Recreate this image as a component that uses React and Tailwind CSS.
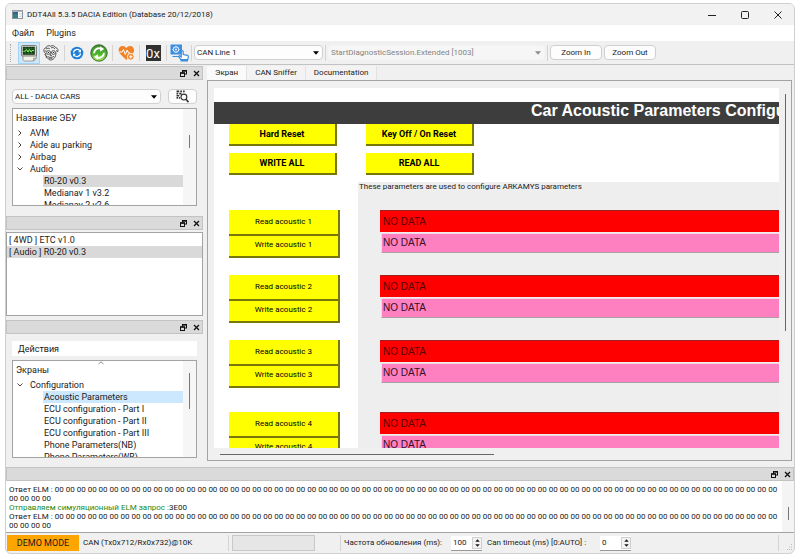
import { useState } from 'react'
import clsx from 'clsx'

const UI_FONT = "font-['Roboto','Noto_Sans',sans-serif]"
const SCREEN_FONT = "font-['Liberation_Sans',Arial,sans-serif]"

const ecuTree = [
  { label: 'AVM' },
  { label: 'Aide au parking' },
  { label: 'Airbag' },
  { label: 'Audio', open: true, children: ['R0-20 v0.3', 'Medianav 1 v3.2', 'Medianav 2 v2.6'] },
]

const screenTree = [
  {
    label: 'Configuration',
    open: true,
    children: [
      'Acoustic Parameters',
      'ECU configuration - Part I',
      'ECU configuration - Part II',
      'ECU configuration - Part III',
      'Phone Parameters(NB)',
      'Phone Parameters(WB)',
    ],
  },
]

const loadedEcus = ['[ 4WD ] ETC v1.0', '[ Audio ] R0-20 v0.3']
const tabs = ['Экран', 'CAN Sniffer', 'Documentation']
const elmReply = Array(70).fill('00').join(' ')

function AppIcon() {
  return (
    <svg viewBox="0 0 11 9" className="h-[9px] w-[11px]">
      <rect x="0.5" y="0.5" width="10" height="8" fill="#fff" stroke="#8a9299" />
      <rect x="0.5" y="0.5" width="10" height="1.5" fill="#a9b4bb" />
      <rect x="1" y="2" width="5" height="6" fill="#2e7f86" />
      <rect x="1" y="2" width="5" height="2" fill="#3b5d8c" />
      <path d="M7 3.5h3M7 5h3M7 6.5h3" stroke="#c4c9cd" strokeWidth="0.6" />
    </svg>
  )
}

function DiagnosticIcon() {
  return (
    <svg viewBox="0 0 18 18" className="size-[18px]">
      <path d="M3 11h13.500v2.500L13.500 17H4.500C3.500 17 3 16 3 15z" fill="#f2f2ea" stroke="#8b8b84" strokeWidth="0.8" />
      <path d="M13.500 17v-3h3z" fill="#c9c9c0" stroke="#8b8b84" strokeWidth="0.6" />
      <rect x="1.500" y="1.500" width="15" height="10.500" rx="1" fill="#d6d6cd" stroke="#66665f" strokeWidth="0.8" />
      <rect x="2.800" y="2.800" width="12" height="8" fill="#17351a" />
      <path d="M3 4.500h11.500M3 7h11.500M3 9.300h11.500M5.500 3v8M8.500 3v8M11.500 3v8" stroke="#2f7a2f" strokeWidth="0.5" />
      <path d="M3.500 7.500l2-.5 1-1.500 1.500 2.500 1.500-2.500 1.500 2.500 1-1.500h2" fill="none" stroke="#7dff5a" strokeWidth="1" />
    </svg>
  )
}

function ExpertIcon() {
  return (
    <svg viewBox="0 0 18 18" className="size-[18px]" fill="none" stroke="#4a4a4a" strokeWidth="0.9">
      <path d="M3 9C1 7 1.500 4 4 4c0-2 3-3 4.500-1.800C10.500 1 13 2 13.500 3.500c2.500.5 3 3 2 4.500" />
      <path d="M4 5c1.500-1 3-1 4 0M9 4c1.500-1 3-.5 4 1M2.500 7h2M14 6.500l1.500 1" />
      <circle cx="6.500" cy="8.500" r="1.900" />
      <circle cx="11.500" cy="8.500" r="1.900" />
      <path d="M8.400 8.300h1.200M9 9.500l-.8 2h1.700M3.500 9c0 3 2 6 4.500 7 3 .5 6-2.500 6-7.500" />
      <path d="M5.500 12.500c2 1.200 4.500 1.200 6.500-.3M7 14.200h3.500M2.500 10.500l1.500 1M3.500 13l1.500.5" />
      <path d="M6 8.500h1M11 8.500h1" stroke="#222" strokeWidth="1.200" />
    </svg>
  )
}

function SyncIcon() {
  return (
    <svg viewBox="0 0 14 14" className="size-[14px]">
      <circle cx="7" cy="7" r="6.300" fill="#1c7ed6" />
      <path d="M3.400 6.600A3.700 3.700 0 0 1 9.800 4.600M10.600 7.400A3.700 3.700 0 0 1 4.200 9.400" fill="none" stroke="#fff" strokeWidth="1.300" />
      <path d="M11 3.200v3H8zM3 10.800v-3h3z" fill="#fff" />
    </svg>
  )
}

function RefreshIcon() {
  return (
    <svg viewBox="0 0 18 18" className="size-[18px]">
      <defs>
        <linearGradient id="refresh-fill" x1="0" y1="0" x2="0" y2="1">
          <stop offset="0" stopColor="#3f8f2c" />
          <stop offset="0.55" stopColor="#4db32d" />
          <stop offset="1" stopColor="#a5ea55" />
        </linearGradient>
      </defs>
      <circle cx="9" cy="9" r="8.200" fill="url(#refresh-fill)" stroke="#2b5b24" strokeWidth="0.9" />
      <path d="M4 9.200A5 5 0 0 1 11 4.700M14 8.800A5 5 0 0 1 7 13.300" fill="none" stroke="#fff" strokeWidth="1.900" />
      <path d="M10 2.300l4.200 2.700-4 2.700zM8 15.700L3.800 13l4-2.700z" fill="#fff" />
    </svg>
  )
}

function HeartIcon() {
  return (
    <svg viewBox="0 0 17 16" className="h-4 w-[17px]">
      <path d="M8.300 15L2 8.700C-.8 5.500 1 1 4.500 1c1.800 0 3 .9 3.800 2.200C9.100 1.900 10.400 1 12.200 1c3.500 0 5.200 4.500 2.500 7.700z" fill="#f08326" />
      <path d="M1 7h3.200l1.300-2.500 1.800 5L9.200 5l1.300 3h1.800" fill="none" stroke="#fff" strokeWidth="1" />
      <circle cx="12.800" cy="11.800" r="3.400" fill="#f08326" stroke="#fff" strokeWidth="0.9" />
      <path d="M12.800 10v3.600M11 11.800h3.600" stroke="#fff" strokeWidth="1" />
    </svg>
  )
}

function TouchIcon() {
  return (
    <svg viewBox="0 0 19 18" className="h-[18px] w-[19px]">
      <rect x="0.500" y="0.500" width="11.500" height="10" rx="0.500" fill="#3a8ee0" />
      <circle cx="6" cy="5.500" r="2.700" fill="none" stroke="#fff" strokeWidth="0.900" />
      <circle cx="6" cy="5.500" r="0.900" fill="#fff" />
      <path d="M6 1.800v1M6 8.200v1M2.300 5.500h1M8.700 5.500h1M3.400 2.900l.7.700M8 7.500l.7.700M8.700 2.900l-.7.700" stroke="#fff" strokeWidth="0.800" />
      <path d="M2.500 12.500h6" stroke="#3a8ee0" strokeWidth="1.200" />
      <path d="M11 15.500l-2.500-3 1.200-.8 1.600 1.200V7.500c0-1.200 1.900-1.200 1.900 0v3l4.300.9c.6.200.8.600.8 1.200l-.4 2.900z" fill="#fff" stroke="#3a8ee0" strokeWidth="1.200" />
      <path d="M10.500 15.500h7.500v2h-7.500z" fill="#3a8ee0" />
    </svg>
  )
}

function ScanIcon() {
  return (
    <svg viewBox="0 0 12 12" className="size-[13px]" fill="none" stroke="#333">
      <path d="M.5 1.300h2.500M4 1.300h1.500M6.500 1.300H8M.5 3.300h1.500M3 3.300h2M.5 5.300h2.500M.5 7.300h1.500M2.800 7.300h1" strokeWidth="1.500" />
      <circle cx="7.300" cy="6.500" r="2.700" fill="#fff" strokeWidth="1" />
      <path d="M9.200 8.500l2.300 2.700" strokeWidth="1.400" />
    </svg>
  )
}

function Caret({ className }) {
  return (
    <svg viewBox="0 0 6 4" className={clsx('pointer-events-none h-1 w-1.5', className)} fill="currentColor">
      <path d="M0 .3h6L3 3.700z" />
    </svg>
  )
}

function Combo({ label, value, disabled, className }) {
  return (
    <label className={clsx('relative flex h-[15px] items-center', className)}>
      <select
        aria-label={label}
        disabled={disabled}
        className={clsx(
          'h-full w-full appearance-none rounded-sm border pl-[2px] pr-4 leading-[12px]',
          disabled ? 'border-[#f4f4f4] bg-[#f6f6f6] text-[#838383]' : 'border-[#d0d0d0] bg-[#fdfdfd] text-[#1a1a1a]'
        )}
      >
        <option>{value}</option>
      </select>
      <Caret className={clsx('absolute right-1', disabled ? 'text-[#8a8a8a]' : 'text-black')} />
    </label>
  )
}

function ToolButton({ label, active, children }) {
  return (
    <button
      aria-label={label}
      className={clsx(
        'flex h-[22px] w-[22px] items-center justify-center',
        active && 'border border-[#a5d3f5] bg-[#cce6fb]'
      )}
    >
      {children}
    </button>
  )
}

function Separator() {
  return <div className="h-4 w-px bg-[#d4d4d4]" />
}

function DockTitle() {
  return (
    <div className="flex h-[14px] shrink-0 items-center justify-end gap-1.5 border border-[#c3c3c3] bg-[#dadada] pr-[2px]">
      <button aria-label="Float">
        <svg viewBox="0 0 7 7" className="size-[7px]" fill="#dadada" stroke="#111">
          <rect x="2.500" y="0.500" width="4" height="3.500" />
          <path d="M2 1h5" strokeWidth="1.300" />
          <rect x="0.500" y="3" width="4" height="3.500" />
          <path d="M0 3h5" strokeWidth="1.300" />
        </svg>
      </button>
      <button aria-label="Close">
        <svg viewBox="0 0 7 7" className="size-[7px]" stroke="#111" strokeWidth="1.300">
          <path d="M1 1l5 5M6 1L1 6" />
        </svg>
      </button>
    </div>
  )
}

function Chevron({ open }) {
  return (
    <svg viewBox="0 0 6 6" className="size-1.5 shrink-0" fill="none" stroke="#444">
      <path d={open ? 'M.5 1.500L3 4l2.500-2.500' : 'M1.500 .5L4 3 1.500 5.500'} />
    </svg>
  )
}

function Tree({ header, nodes, initial, selectedClass, thumbClass, sortable }) {
  const [selected, setSelected] = useState(initial)
  return (
    <div className="flex h-[98px] overflow-hidden border border-[#a3a3a3] bg-white">
      <div className="min-w-0 flex-1 overflow-hidden">
        <div className="relative flex h-[18px] items-center pl-[3px]">
          {header}
          {sortable && (
            <svg viewBox="0 0 6 4" className="absolute left-1/2 top-0 h-1 w-1.5" fill="none" stroke="#888">
              <path d="M.5 3L3 .8 5.500 3" />
            </svg>
          )}
        </div>
        {nodes.map((node) => (
          <div key={node.label}>
            <button className="flex h-3 w-full items-center gap-[7px] pl-1 text-left">
              <Chevron open={node.open} />
              {node.label}
            </button>
            {node.open &&
              node.children.map((child) => (
                <button
                  key={child}
                  onClick={() => setSelected(child)}
                  className="block h-3 w-full pl-[30px] text-left"
                >
                  <span className={clsx('block h-3 truncate pl-px leading-[12px]', child === selected && selectedClass)}>
                    {child}
                  </span>
                </button>
              ))}
          </div>
        ))}
      </div>
      <div className="flex w-[13px] justify-center bg-[#f6f6f6]">
        <div className={clsx('w-px bg-[#777]', thumbClass)} />
      </div>
    </div>
  )
}

function ScreenButton({ className, children }) {
  return (
    <button
      className={clsx(
        'flex items-center justify-center border-b-2 border-r-2 border-[#77770a] bg-[#ffff00] text-black',
        className
      )}
    >
      {children}
    </button>
  )
}

function AcousticButtons({ index }) {
  return (
    <div className={clsx('flex h-12 w-[111px] flex-col text-[8px]', UI_FONT)}>
      <ScreenButton className="h-[26px] shrink-0">Read acoustic {index}</ScreenButton>
      <ScreenButton className="h-[22px] shrink-0 pb-[2px]">Write acoustic {index}</ScreenButton>
    </div>
  )
}

function AcousticData({ index }) {
  return (
    <div className="flex h-12 flex-col text-[10px]">
      <output
        aria-label={`Acoustic ${index}`}
        className="flex h-[22px] shrink-0 items-center border-t border-[#a02020] bg-[#ff0000] pl-[3px] text-[#5a0000]"
      >
        NO DATA
      </output>
      <input
        aria-label={`New acoustic ${index}`}
        defaultValue="NO DATA"
        className="ml-px mt-px h-5 shrink-0 border-b border-l border-t border-b-[#a9a0a6] border-l-[#f6d5e4] border-t-[#f6d5e4] bg-[#ff80c0] pb-[2px] pl-px text-[#33101f]"
      />
    </div>
  )
}

function Spin({ id, value, className }) {
  return (
    <div className={clsx('flex h-[15px] items-center border-b border-[#999] bg-white pl-[2px]', className)}>
      <input id={id} type="text" inputMode="numeric" defaultValue={value} className="w-0 min-w-0 flex-1" />
      <div className="flex h-3 w-[10px] flex-col items-center justify-center gap-[2px] border border-[#cfcfcf] bg-[#f3f3f3]">
        <button aria-label="Increase">
          <Caret className="block h-[3px] w-[5px] rotate-180" />
        </button>
        <button aria-label="Decrease">
          <Caret className="block h-[3px] w-[5px]" />
        </button>
      </div>
    </div>
  )
}

export default function App() {
  const [tab, setTab] = useState('Экран')

  return (
    <div className={clsx('h-screen bg-white px-[5px] pb-[5px] pt-[3px] text-[9px] leading-[12px] text-[#1a1a1a]', UI_FONT)}>
      <div className="flex h-full flex-col overflow-hidden rounded-md border border-[#cfcfcf] bg-[#f0f0f0]">
        <header className="flex h-[21px] shrink-0 items-center bg-[#f2f2f2] pl-1.5">
          <AppIcon />
          <h1 className="ml-1 text-[8px]">DDT4All 5.3.5 DACIA Edition (Database 20/12/2018)</h1>
          <div className="ml-auto flex items-center gap-[25px] pr-3">
            <button aria-label="Minimize">
              <svg viewBox="0 0 8 8" className="size-2" stroke="#222">
                <path d="M0 4.500h8" />
              </svg>
            </button>
            <button aria-label="Maximize">
              <svg viewBox="0 0 8 8" className="size-2" fill="none" stroke="#222">
                <rect x="0.500" y="0.500" width="7" height="7" rx="1" />
              </svg>
            </button>
            <button aria-label="Close window">
              <svg viewBox="0 0 8 8" className="size-2" stroke="#222">
                <path d="M.5 .5l7 7M7.500 .5l-7 7" />
              </svg>
            </button>
          </div>
        </header>

        <nav className="flex h-4 shrink-0 items-center gap-3 bg-white pl-1.5">
          <button>Файл</button>
          <button>Plugins</button>
        </nav>

        <div className="flex h-6 shrink-0 items-center border-b border-[#c2c2c2] pl-1">
          <div className="mr-[7px] h-[18px] border-l border-dotted border-[#aaa]" />
          <ToolButton label="Connected mode" active><DiagnosticIcon /></ToolButton>
          <ToolButton label="Expert mode"><ExpertIcon /></ToolButton>
          <div className="ml-0.5 mr-px"><Separator /></div>
          <ToolButton label="Auto refresh"><SyncIcon /></ToolButton>
          <ToolButton label="Refresh"><RefreshIcon /></ToolButton>
          <div className="mx-0.5"><Separator /></div>
          <ToolButton label="Diagnostics"><HeartIcon /></ToolButton>
          <div className="mx-0.5"><Separator /></div>
          <ToolButton label="Hex input">
            <span className="flex h-4 w-[15px] items-center justify-center bg-[#303030] pt-[2px] text-[13px] text-white">
              0x
            </span>
          </ToolButton>
          <div className="ml-0.5 mr-px"><Separator /></div>
          <ToolButton label="Command"><TouchIcon /></ToolButton>
          <div className="ml-px mr-0.5"><Separator /></div>
          <Combo label="CAN line" value="CAN Line 1" className="w-[129px] text-[8px]" />
          <div className="mx-[2px]"><Separator /></div>
          <Combo label="Session" value="StartDiagnosticSession.Extended [1003]" disabled className="w-[217px] text-[8px]" />
          <div className="mx-[2px]"><Separator /></div>
          <button className="h-[15px] w-[52px] rounded-sm border border-[#d0d0d0] bg-[#fdfdfd] text-[8px]">Zoom In</button>
          <button className="ml-[2px] h-[15px] w-[52px] rounded-sm border border-[#d0d0d0] bg-[#fdfdfd] text-[8px]">Zoom Out</button>
        </div>

        <div className="flex min-h-0 flex-1 gap-1 pr-[2px] pt-px">
          <aside className="flex w-[197px] shrink-0 flex-col">
            <DockTitle />
            <div className="px-1.5 pb-[10px] pt-[9px]">
              <div className="mb-1 flex justify-between">
                <Combo label="Vehicle" value="ALL - DACIA CARS" className="w-[149px] text-[8px]" />
                <button aria-label="Scan" className="flex h-[15px] w-[29px] items-center justify-center rounded-sm border border-[#d0d0d0] bg-[#fdfdfd]">
                  <ScanIcon />
                </button>
              </div>
              <Tree
                header="Название ЭБУ"
                nodes={ecuTree}
                initial="R0-20 v0.3"
                selectedClass="bg-[#d9d9d9]"
                thumbClass="mt-[26px] h-[13px]"
              />
            </div>

            <DockTitle />
            <ul className="mt-[2px] min-h-0 flex-1 border border-[#a3a3a3] bg-white pt-px">
              {loadedEcus.map((ecu, i) => (
                <li key={ecu}>
                  <button className={clsx('block h-3 w-full pl-[2px] text-left', i === 1 && 'bg-[#d9d9d9]')}>{ecu}</button>
                </li>
              ))}
            </ul>

            <div className="mt-1">
              <DockTitle />
            </div>
            <div className="px-1.5 pb-[3px] pt-[7px]">
              <button className="mb-1 block h-[15px] w-full bg-white pl-1.5 text-left">Действия</button>
              <Tree
                header="Экраны"
                nodes={screenTree}
                initial="Acoustic Parameters"
                selectedClass="bg-[#cce8ff]"
                thumbClass="mt-3 h-9"
                sortable
              />
            </div>
          </aside>

          <main className="flex min-w-0 flex-1 flex-col">
            <div role="tablist" className="flex h-[14px] shrink-0 text-[8px]">
              {tabs.map((name) => (
                <button
                  key={name}
                  role="tab"
                  aria-selected={name === tab}
                  onClick={() => setTab(name)}
                  className={clsx('border-r border-[#e2e2e2] px-2', name === tab ? 'bg-[#fafafa]' : 'bg-[#f3f3f3]')}
                >
                  {name}
                </button>
              ))}
            </div>

            <div className={clsx('flex min-h-0 flex-1 flex-col border border-[#a3a3a3] pl-1.5 pt-[7px]', SCREEN_FONT)}>
              <div className="flex min-h-0 flex-1">
                <div className="flex min-w-0 flex-1 flex-col overflow-hidden bg-white">
                  <div className="mt-[14px] flex h-[22px] shrink-0 items-start overflow-hidden bg-[#3d3d3d] pl-[317px]">
                    <h2 className="whitespace-nowrap text-[16px] leading-[18px] font-bold text-white">
                      Car Acoustic Parameters Configuration
                    </h2>
                  </div>
                  <div className={clsx('grid shrink-0 grid-cols-[108px_108px] gap-x-[29px] gap-y-[7px] pb-[7px] pl-[15px] font-bold', UI_FONT)}>
                    <ScreenButton className="h-[22px]">Hard Reset</ScreenButton>
                    <ScreenButton className="h-[22px]">Key Off / On Reset</ScreenButton>
                    <ScreenButton className="h-[22px]">WRITE ALL</ScreenButton>
                    <ScreenButton className="h-[22px]">READ ALL</ScreenButton>
                  </div>
                  <div className="flex min-h-0 flex-1">
                    <div className="flex w-[144px] shrink-0 flex-col gap-[17px] pl-[15px] pt-[28px]">
                      <AcousticButtons index={1} />
                      <AcousticButtons index={2} />
                      <AcousticButtons index={3} />
                      <div className="mt-[7px]">
                        <AcousticButtons index={4} />
                      </div>
                    </div>
                    <div className="flex min-w-0 flex-1 flex-col bg-[#eeeeee]">
                      <p className={clsx('h-[28px] shrink-0 whitespace-nowrap pl-px text-[8px] leading-[10px]', UI_FONT)}>
                        These parameters are used to configure ARKAMYS parameters
                      </p>
                      <div className="flex flex-col gap-[17px] pl-[22px]">
                        <AcousticData index={1} />
                        <AcousticData index={2} />
                        <AcousticData index={3} />
                        <div className="mt-[7px]">
                          <AcousticData index={4} />
                        </div>
                      </div>
                    </div>
                  </div>
                </div>
                <div className="flex w-3 justify-center">
                  <div className="mt-1.5 h-[237px] w-px bg-[#666]" />
                </div>
              </div>
              <div className="flex h-3 shrink-0 items-center pl-1.5">
                <div className="h-px w-[48%] bg-[#666]" />
              </div>
            </div>
          </main>
        </div>

        <section className="mt-[6px] shrink-0">
          <DockTitle />
          <div className="flex h-[52px] overflow-hidden border-b border-[#a3a3a3] bg-white">
            <div className="min-w-0 flex-1 pl-[3px] pr-1 pt-1 text-[8px] leading-[9px]">
              <p>Ответ ELM : {elmReply}</p>
              <p><span className="text-[#1a8a1a]">Отправляем симуляционный ELM запрос :</span>3E00</p>
              <p>Ответ ELM : {elmReply}</p>
            </div>
            <div className="flex w-3 justify-center bg-[#f4f4f4]">
              <div className="mt-[26px] h-[13px] w-px bg-[#777]" />
            </div>
          </div>
        </section>

        <footer className="flex h-5 shrink-0 items-center pl-px text-[8px]">
          <div className="flex h-4 w-[72px] items-center justify-center bg-[#ffa500] text-[9px]">DEMO MODE</div>
          <div className="w-[149px] pl-1">CAN (Tx0x712/Rx0x732)@10K</div>
          <Separator />
          <div className="ml-[3px] h-4 w-[83px] border border-[#c8c8c8] bg-[#e6e6e6]" />
          <div className="ml-[25px]"><Separator /></div>
          <label htmlFor="refresh-rate" className="w-[110px] whitespace-nowrap pl-[3px]">Частота обновления (ms):</label>
          <Spin id="refresh-rate" value={100} className="w-[31px]" />
          <label htmlFor="can-timeout" className="w-[118px] whitespace-nowrap pl-[5px]">Can timeout (ms) [0:AUTO] :</label>
          <Spin id="can-timeout" value={0} className="w-[31px]" />
          <div className="ml-auto mr-[7px]"><Separator /></div>
          <svg viewBox="0 0 7 7" className="mr-px mt-2 size-[7px]" fill="#bbb">
            <path d="M5 0h1v1H5zM3 2.500h1v1H3zM5 2.500h1v1H5zM1 5h1v1H1zM3 5h1v1H3zM5 5h1v1H5z" />
          </svg>
        </footer>
      </div>
    </div>
  )
}
